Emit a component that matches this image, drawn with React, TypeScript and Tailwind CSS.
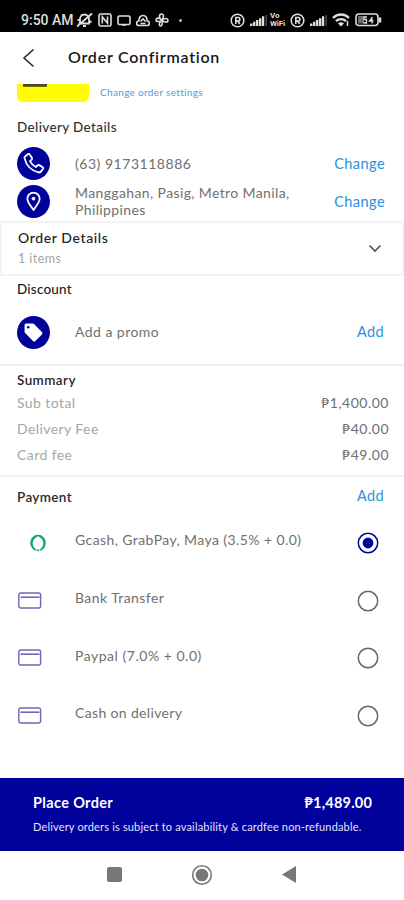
import { useState } from "react";
import type { ReactNode } from "react";

const paymentMethods = [
  { id: "ewallet", label: "Gcash, GrabPay, Maya (3.5% + 0.0)", tracking: "tracking-[0.41px]" },
  { id: "bank", label: "Bank Transfer", tracking: "tracking-[0.43px]" },
  { id: "paypal", label: "Paypal (7.0% + 0.0)", tracking: "tracking-[0.52px]" },
  { id: "cod", label: "Cash on delivery", tracking: "tracking-[0.35px]" },
];

const summary = [
  { label: "Sub total", amount: "₱1,400.00" },
  { label: "Delivery Fee", amount: "₱40.00" },
  { label: "Card fee", amount: "₱49.00" },
];

function RegisteredIcon() {
  return (
    <svg viewBox="0 0 15 15" className="h-[15px] w-[15px]" fill="none" stroke="currentColor" strokeWidth="1.6">
      <circle cx="7.5" cy="7.5" r="6.3" />
      <path d="M5.8 11V4.5h2.3a1.7 1.7 0 0 1 0 3.6H5.8M8 8.1l1.7 2.9" strokeWidth="1.6" />
    </svg>
  );
}

function SignalIcon() {
  return (
    <svg viewBox="0 0 17 13" className="h-[13px] w-[17px]" fill="currentColor">
      <path d="M0 9.5h2.4V12H0zM3 7.8h2.4V12H3zM6 6h2.4v6H6zM9 4.2h2.4V12H9zM12 2.2h2.2V12H12z" />
      <path d="M15.6 1h1v11h-1z" opacity="0.5" />
    </svg>
  );
}

function StatusBar() {
  return (
    <div className="flex h-8 shrink-0 items-center bg-black pt-2 pl-[21px] text-[#dedede]">
      <span className="w-[53px] text-[14px] leading-4 font-medium whitespace-nowrap font-[Roboto,sans-serif]">9:50 AM</span>
      <div className="ml-[2px] flex items-center gap-[5px]">
        <svg viewBox="0 0 17 16" className="h-4 w-[17px]" fill="none" stroke="currentColor" strokeWidth="1.8">
          <path d="M4 11.5V7a4.5 4.5 0 0 1 9 0v4.5H2.5M7 14h3M1 14.5 16 1.5M1.5 8.5l2-1M13.5 9l2 1.5M5 2.5 6.5 4" />
        </svg>
        <svg viewBox="0 0 14 14" className="h-[14px] w-[14px]" fill="none" stroke="currentColor" strokeWidth="1.6">
          <rect x="1" y="1" width="12" height="12" rx="1.5" />
          <path d="M4.3 10.5V4l5.2 6V3.5" />
        </svg>
        <svg viewBox="0 0 14 13" className="h-[13px] w-[14px]" fill="none" stroke="currentColor" strokeWidth="1.6">
          <rect x="1" y="2" width="12" height="8.5" rx="1.5" />
          <path d="M5 11.3h4" strokeWidth="1" />
        </svg>
        <svg viewBox="0 0 14 13" className="h-[13px] w-[14px]" fill="none" stroke="currentColor" strokeWidth="1.6">
          <path d="M3 11.5a2.2 2.2 0 0 1-.2-4.5C3 3.5 4.5 1.5 7 1.5s4 2 4.2 5.5a2.2 2.2 0 0 1-.2 4.5zM4.5 7.5 7 5l2.5 2.5M4.5 9.5h5" />
        </svg>
        <svg viewBox="0 0 14 14" className="h-[14px] w-[14px]" fill="none" stroke="currentColor" strokeWidth="1.6">
          <path d="M7 7C3.5 5.5 4 1 6.5 1S9 4.5 7 7c3.5-2.5 6-1.5 6 .5s-3.5 2.5-6-.5c1 3.5 0 6-1.500 6S3.5 9.5 7 7C5 9 1 9 1 7s3-3 6 0" />
        </svg>
      </div>
      <span className="ml-[10px] h-[3px] w-[3px] rounded-full bg-[#bbbbbb]" />
      <div className="ml-[48px] flex items-center">
        <RegisteredIcon />
        <span className="ml-[5px]"><SignalIcon /></span>
        <span className="ml-[3px] flex w-[17px] flex-col text-[8px] leading-[8px] font-bold whitespace-nowrap font-[Roboto,sans-serif]">
          <span>Vo</span>
          <span className="tracking-[-0.2px]">WiFi</span>
        </span>
        <span className="ml-[3px]"><RegisteredIcon /></span>
        <span className="ml-[5px]"><SignalIcon /></span>
        <svg viewBox="0 0 18 14" className="ml-[5px] h-[14px] w-[18px]" fill="none" stroke="currentColor" strokeWidth="2.4">
          <path d="M1 5a11 11 0 0 1 16 0M4 8.2a7 7 0 0 1 10 0" />
          <path d="m6 10.5 3 3 3-3a4 4 0 0 0-6 0z" fill="currentColor" stroke="none" />
          <path d="M15.5 8v5" strokeWidth="1.5" />
        </svg>
        <svg viewBox="0 0 27 14" className="ml-[5px] h-[14px] w-[27px]" fill="none" stroke="currentColor">
          <rect x="1" y="1" width="22" height="11.5" rx="3" strokeWidth="1.6" />
          <path d="M25 4.5v5" strokeWidth="2.5" />
          <rect x="3" y="3" width="6" height="7.5" fill="currentColor" fillOpacity="0.5" stroke="none" />
          <path d="M12 4H9v2.5h2.5V10H8.5M17.5 4l-3 4h4M17 6v4.5" strokeWidth="1.3" />
        </svg>
      </div>
    </div>
  );
}

function RoundIcon({ children }: { children: ReactNode }) {
  return (
    <div className="flex h-[33px] w-[33px] shrink-0 items-center justify-center rounded-full bg-[#00009b] text-white">
      {children}
    </div>
  );
}

function CardIcon() {
  return (
    <svg viewBox="0 0 24 18" className="ml-px h-[18px] w-6" fill="none" stroke="#6c68b5" strokeWidth="1.4">
      <rect x="0.8" y="1" width="21.8" height="15" rx="2" />
      <path d="M2.5 5.2h19" strokeWidth="1.6" />
    </svg>
  );
}

function LeafRingIcon() {
  return (
    <svg viewBox="0 0 16 18" className="ml-[13px] h-[18px] w-4">
      <ellipse cx="8" cy="9" rx="7.8" ry="8.2" fill="#12a573" />
      <path d="M8 2.3c3 1.200 5.300 3.900 5.300 7 0 2.800-1.600 5.200-3.800 6.200h-3c-2.200-1-3.800-3.400-3.800-6.200 0-3.100 2.300-5.800 5.300-7z" fill="#fff" />
      <path d="M6.400 14.500V18M9.600 14.500V18" stroke="#fff" strokeWidth="0.8" />
    </svg>
  );
}

export default function App() {
  const [selected, setSelected] = useState("ewallet");

  return (
    <div className="flex h-[900px] w-[404px] flex-col overflow-hidden bg-white text-[14px] text-[#707070] font-[Lato,'Noto_Sans',sans-serif]">
      <StatusBar />

      <header className="flex h-[51px] shrink-0 items-center pl-[22px]">
        <svg viewBox="0 0 14 20" className="h-5 w-[14px]" fill="none" stroke="#222222" strokeWidth="1.5">
          <path d="M11.5 1.5 2 10l9.5 8.5" />
        </svg>
        <h1 className="ml-[32px] pb-[2px] text-[16px] font-semibold tracking-[0.75px] text-[#181818]">Order Confirmation</h1>
      </header>

      <div className="flex h-[30px] shrink-0 items-start pl-[17px]">
        <div className="mt-[1px] flex h-[18px] w-[72px] items-start rounded-b-[6px] bg-[#fffb00] pl-[6px]">
          <span className="h-[3px] w-6 border-b border-dotted border-[#8a8a20] bg-[#4a4a3a]" />
        </div>
        <button className="mt-[1px] ml-[11px] text-[10px] leading-4 tracking-[0.33px] text-[#4aa0dc]">Change order settings</button>
      </div>

      {/* Delivery */}
      <section className="h-[108px] shrink-0 pr-[19px] pl-[17px]">
        <h2 className="pt-[5px] text-[13.5px] leading-[18px] font-medium tracking-[0.36px] text-[#333333]">Delivery Details</h2>
        <div className="mt-[11px] flex h-[33px] items-center">
          <RoundIcon>
            <svg viewBox="0 0 24 24" className="h-[23px] w-[23px]" fill="none" stroke="currentColor" strokeWidth="1.9" strokeLinejoin="round">
              <path d="m3.5 4.5 2.8-2.3c.6-.4 1.3-.3 1.7.3l2.3 3.6c.4.6.3 1.3-.2 1.8L8.3 9.5c1.3 2.6 3.4 4.7 6.2 6.2l1.7-1.8c.5-.5 1.2-.6 1.8-.2l3.6 2.3c.6.4.7 1.1.3 1.7l-2.3 2.8c-.5.7-1.3 1-2.2.8C9.9 19.6 4.3 13.9 2.7 6.7c-.2-.9.1-1.700.8-2.200z" />
            </svg>
          </RoundIcon>
          <span className="ml-[25px] pb-px tracking-[0.53px]">(63) 9173118886</span>
          <button className="ml-auto text-[14.5px] tracking-[0.45px] text-[#2b8ede]">Change</button>
        </div>
        <div className="mt-[5px] flex h-[33px] items-center">
          <RoundIcon>
            <svg viewBox="0 0 18 22" className="h-[21px] w-[17px]" fill="none" stroke="currentColor" strokeWidth="1.9" strokeLinejoin="round">
              <path d="M9 20C5.5 15 2.5 11.5 2.5 8a6.5 6.5 0 0 1 13 0c0 3.5-3 7-6.500 12z" />
              <circle cx="9" cy="8" r="1.5" fill="currentColor" strokeWidth="1" />
            </svg>
          </RoundIcon>
          <p className="ml-[25px] pb-[2px] leading-[17px] tracking-[0.38px]">
            Manggahan, Pasig, Metro Manila,<br />Philippines
          </p>
          <button className="ml-auto text-[14.5px] tracking-[0.45px] text-[#2b8ede]">Change</button>
        </div>
      </section>

      {/* Order details */}
      <section className="flex h-[55px] shrink-0 items-center border-2 border-[#f3f3f3] pr-[20px] pl-4">
        <div>
          <h2 className="text-[14px] leading-[18px] font-medium tracking-[0.62px] text-[#222222]">Order Details</h2>
          <p className="mt-[3px] text-[12.5px] leading-[18px] tracking-[0.45px] text-[#a6a6a6]">1 items</p>
        </div>
        <svg viewBox="0 0 14 9" className="ml-auto h-[9px] w-[14px]" fill="none" stroke="#555555" strokeWidth="1.7">
          <path d="m1.5 1.5 5.5 5.5 5.5-5.5" />
        </svg>
      </section>

      {/* Discount */}
      <section className="h-[90px] shrink-0 border-b-2 border-[#eeeeee] pr-[20px] pl-[17px]">
        <h2 className="pt-[4px] text-[13.5px] leading-[18px] font-medium tracking-[0.2px] text-[#222222]">Discount</h2>
        <div className="mt-[18px] flex h-[33px] items-center">
          <RoundIcon>
            <svg viewBox="0 0 20 20" className="h-[21px] w-[21px]">
              <path d="M1.5 3A1.5 1.5 0 0 1 3 1.5h6.2c.5 0 1 .2 1.3.5l7.5 7.5c.7.7.7 1.6 0 2.3l-6.2 6.2c-.7.7-1.6.7-2.3 0L2 10.5c-.3-.3-.5-.8-.5-1.3z" fill="currentColor" />
              <circle cx="5" cy="5" r="1.2" fill="#00009b" />
            </svg>
          </RoundIcon>
          <span className="ml-[25px] pb-[2px] tracking-[0.45px]">Add a promo</span>
          <button className="ml-auto pb-[2px] text-[14.5px] tracking-[0.4px] text-[#2b8ede]">Add</button>
        </div>
      </section>

      {/* Summary */}
      <section className="h-[111px] shrink-0 border-b-2 border-[#f0f0f0] pr-[15px] pl-[17px]">
        <h2 className="mb-px pt-[5px] text-[13.5px] leading-[18px] font-semibold tracking-[0.4px] text-[#2a2a2a]">Summary</h2>
        {summary.map((row) => (
          <div key={row.label} className="flex h-[25.7px] items-center justify-between">
            <span className="tracking-[0.42px] text-[#a6a6a6]">{row.label}</span>
            <span className="tracking-[0.5px]">{row.amount}</span>
          </div>
        ))}
      </section>

      {/* Payment */}
      <section className="flex-1 pr-[20px] pl-[17px]">
        <div className="flex h-[37px] items-center justify-between pt-[3px]">
          <h2 className="text-[13.5px] font-semibold tracking-[0.35px] text-[#2a2a2a]">Payment</h2>
          <button className="pb-[2px] text-[14.5px] tracking-[0.4px] text-[#2b8ede]">Add</button>
        </div>
        {paymentMethods.map((method) => (
          <button key={method.id} className="flex h-[57.7px] w-full items-center" onClick={() => setSelected(method.id)}>
            <span className="w-[58px] shrink-0">{method.id === "ewallet" ? <LeafRingIcon /> : <CardIcon />}</span>
            <span className={`pb-[6px] whitespace-nowrap ${method.tracking}`}>{method.label}</span>
            <svg viewBox="0 0 22 22" className="mr-[5px] ml-auto h-[22px] w-[22px]">
              <circle cx="11" cy="11" r="9.7" fill="none" stroke={selected === method.id ? "#00009b" : "#666666"} strokeWidth="1.5" />
              {selected === method.id && <circle cx="11" cy="11" r="5.4" fill="#00009b" />}
            </svg>
          </button>
        ))}
      </section>

      <footer className="h-[73px] shrink-0 bg-[#00009b] pt-[15px] pr-8 pl-[33px] text-white">
        <div className="flex h-5 items-center justify-between text-[14.5px] font-bold">
          <span className="tracking-[0.35px]">Place Order</span>
          <span className="tracking-[0.2px]">₱1,489.00</span>
        </div>
        <p className="mt-[6px] text-[11px] leading-4 tracking-[0.17px] whitespace-nowrap text-[#e4e4ff]">
          Delivery orders is subject to availability &amp; cardfee non-refundable.
        </p>
      </footer>

      <nav className="flex h-[49px] shrink-0 items-center bg-white pb-[2px] pl-[107px]">
        <span className="h-[15px] w-[15px] rounded-[2px] bg-[#777777]" />
        <svg viewBox="0 0 22 22" className="ml-[69px] h-[22px] w-[22px]">
          <circle cx="11" cy="11" r="9.3" fill="none" stroke="#777777" strokeWidth="1.6" />
          <circle cx="11" cy="11" r="6.3" fill="#777777" />
        </svg>
        <svg viewBox="0 0 14 17" className="ml-[69px] h-[17px] w-[14px]" fill="#777777">
          <path d="M14 0v17L0 8.5z" />
        </svg>
      </nav>
    </div>
  );
}
